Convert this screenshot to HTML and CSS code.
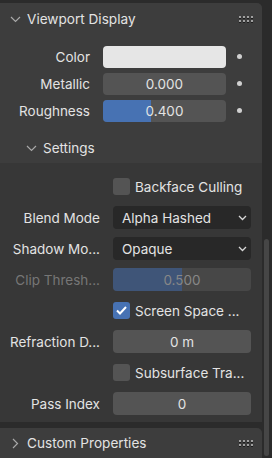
FILE: index.html
```html
<!DOCTYPE html>
<html lang="en">
<head>
    <meta charset="UTF-8">
    <title>Material - Viewport Display</title>
    <link rel="stylesheet" href="styles.css">
</head>
<body>
    <div class="editor">
        <div class="panels">
            <div class="panel">
                <div class="panel-header">
                    <svg class="chevron" width="11" height="7" viewBox="0 0 11 7"><path d="M1 1 L5.5 5.5 L10 1" fill="none" stroke="#a8a8a8" stroke-width="1.2"/></svg>
                    <span class="panel-title">Viewport Display</span>
                    <span class="grip"><i></i><i></i><i></i><i></i><i></i><i></i><i></i><i></i></span>
                </div>
                <div class="top-rows">
                    <div class="row">
                        <div class="label">Color</div>
                        <div class="field swatch"></div>
                        <div class="keyframe"></div>
                    </div>
                    <div class="row">
                        <div class="label">Metallic</div>
                        <div class="field number">0.000</div>
                        <div class="keyframe"></div>
                    </div>
                    <div class="row">
                        <div class="label">Roughness</div>
                        <div class="field number slider"><span class="fill" style="width: 39%"></span><span class="value">0.400</span></div>
                        <div class="keyframe"></div>
                    </div>
                </div>

                <div class="subpanel-header">
                    <svg class="chevron" width="11" height="7" viewBox="0 0 11 7"><path d="M1 1 L5.5 5.5 L10 1" fill="none" stroke="#a8a8a8" stroke-width="1.2"/></svg>
                    <span class="subpanel-title">Settings</span>
                </div>
                <div class="subpanel-body">
                    <div class="srow">
                        <div class="slabel"></div>
                        <div class="check"><span class="box"></span><span>Backface Culling</span></div>
                    </div>
                    <div class="srow">
                        <div class="slabel">Blend Mode</div>
                        <div class="dropdown"><span>Alpha Hashed</span>
                            <svg width="9" height="6" viewBox="0 0 9 6"><path d="M1 1 L4.5 4.5 L8 1" fill="none" stroke="#d8d8d8" stroke-width="1.3"/></svg>
                        </div>
                    </div>
                    <div class="srow">
                        <div class="slabel">Shadow Mo...</div>
                        <div class="dropdown"><span>Opaque</span>
                            <svg width="9" height="6" viewBox="0 0 9 6"><path d="M1 1 L4.5 4.5 L8 1" fill="none" stroke="#d8d8d8" stroke-width="1.3"/></svg>
                        </div>
                    </div>
                    <div class="srow">
                        <div class="slabel dim">Clip Thresh...</div>
                        <div class="sfield slider disabled"><span class="fill" style="width: 50%"></span><span class="value">0.500</span></div>
                    </div>
                    <div class="srow">
                        <div class="slabel"></div>
                        <div class="check"><span class="box checked">
                            <svg width="13" height="11" viewBox="0 0 13 11"><path d="M2 5.5 L5 8.5 L11 2" fill="none" stroke="#fff" stroke-width="2"/></svg>
                        </span><span>Screen Space ...</span></div>
                    </div>
                    <div class="srow">
                        <div class="slabel">Refraction D...</div>
                        <div class="sfield">0 m</div>
                    </div>
                    <div class="srow">
                        <div class="slabel"></div>
                        <div class="check"><span class="box"></span><span>Subsurface Tra...</span></div>
                    </div>
                    <div class="srow">
                        <div class="slabel">Pass Index</div>
                        <div class="sfield">0</div>
                    </div>
                </div>
            </div>

            <div class="panel closed">
                <div class="panel-header">
                    <svg class="chevron" width="11" height="11" viewBox="0 0 11 11"><path d="M3 1 L7.5 5.5 L3 10" fill="none" stroke="#a8a8a8" stroke-width="1.2"/></svg>
                    <span class="panel-title">Custom Properties</span>
                    <span class="grip"><i></i><i></i><i></i><i></i><i></i><i></i><i></i><i></i></span>
                </div>
            </div>
        </div>
        <div class="scroll-track">
            <div class="scroll-thumb"></div>
        </div>
    </div>
</body>
</html>
```

FILE: styles.css
```css
body {
    margin: 0;
    background-color: #2b2b2b;
    font-family: Inter, "Noto Sans", sans-serif;
    font-size: 13.5px;
    color: #e3e3e3;
}
.editor {
    display: flex;
    width: 272px;
    height: 458px;
    overflow: hidden;
}
.panels {
    width: 262px;
    padding-top: 3px;
    display: flex;
    flex-direction: column;
    gap: 6px;
}
.panel {
    background-color: #3d3d3d;
    border-radius: 0 5px 0 0;
    overflow: hidden;
}
.panel-header {
    height: 32px;
    display: flex;
    align-items: center;
    padding-left: 10px;
    padding-right: 9px;
}
.panel-header .chevron {
    margin-right: 6px;
}
.panel-title {
    flex: 1;
    font-size: 13.6px;
}
.closed .panel-header {
    height: 30px;
    padding-left: 10px;
}
.closed .chevron {
    margin-right: 6px;
}
.grip {
    display: grid;
    grid-template-columns: repeat(4, 2px);
    gap: 2px;
}
.grip i {
    display: block;
    width: 2px;
    height: 2px;
    background-color: #a0a0a0;
    box-shadow: 0 1px 0 #1c1c1c;
}

.top-rows {
    padding-top: 8px;
    padding-bottom: 9px;
}
.row {
    height: 27px;
    display: flex;
    align-items: center;
}
.label {
    width: 90px;
    text-align: right;
    padding-right: 13px;
}
.field {
    width: 123px;
    height: 22px;
    border-radius: 4px;
    background-color: #545454;
}
.swatch {
    background-color: #e6e6e6;
}
.number {
    display: flex;
    align-items: center;
    justify-content: center;
}
.slider {
    position: relative;
    overflow: hidden;
}
.slider .fill {
    position: absolute;
    left: 0;
    top: 0;
    bottom: 0;
    background-color: #4772b3;
}
.slider .value {
    position: relative;
}
.keyframe {
    width: 5px;
    height: 5px;
    border-radius: 50%;
    background-color: #d0d0d0;
    margin-left: 11px;
}

.subpanel-header {
    height: 30px;
    display: flex;
    align-items: center;
    padding-left: 26px;
}
.subpanel-header .chevron {
    margin-right: 6px;
}
.subpanel-body {
    background-color: #373737;
    padding: 8px 0 3px 0;
}
.srow {
    height: 31px;
    display: flex;
    align-items: center;
}
.slabel {
    width: 100px;
    text-align: right;
    padding-right: 13px;
    white-space: nowrap;
}
.dim {
    color: #767676;
}
.check {
    display: flex;
    align-items: center;
    gap: 5px;
}
.box {
    width: 17px;
    height: 17px;
    border-radius: 3px;
    background-color: #545454;
    display: flex;
    align-items: center;
    justify-content: center;
}
.box.checked {
    background-color: #4772b3;
}
.dropdown {
    width: 138px;
    height: 23px;
    box-sizing: border-box;
    border-radius: 4px;
    background-color: #282828;
    display: flex;
    align-items: center;
    justify-content: space-between;
    padding: 0 4px 0 9px;
}
.sfield {
    width: 138px;
    height: 23px;
    border-radius: 4px;
    background-color: #545454;
    display: flex;
    align-items: center;
    justify-content: center;
}
.sfield.disabled {
    background-color: #474747;
    color: #878787;
}
.sfield.disabled .fill {
    background-color: #3f5578;
}

.scroll-track {
    width: 10px;
}
.scroll-thumb {
    margin: 239px 0 0 2px;
    width: 5px;
    height: 217px;
    border-radius: 3px;
    background-color: #464646;
}
```
